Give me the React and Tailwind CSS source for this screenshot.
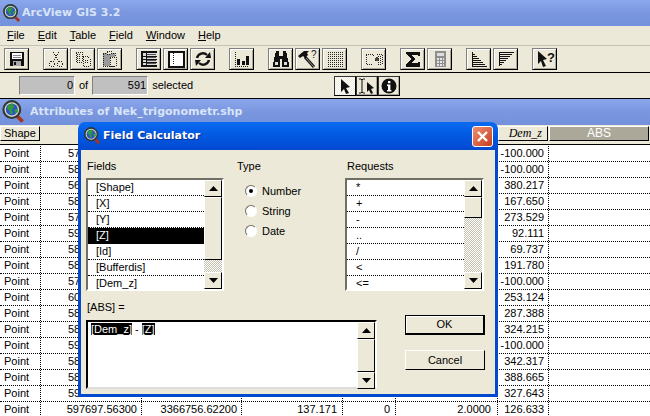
const FACE = "bg-[#ece9d8]";
const DITHER = "bg-[repeating-conic-gradient(#c4c1b0_0_25%,#fff_0_50%)] bg-size-[2px_2px]";

const GlobeIcon = ({ size = 20 }) => (
  <svg width={size} height={size} viewBox="0 0 20 20">
    <path d="M12 12l6 6" stroke="#a8321e" strokeWidth="3" />
    <circle cx="9" cy="8" r="7" fill="#d8d8c8" stroke="#2f3a35" strokeWidth="1.8" />
    <circle cx="9" cy="8" r="5" fill="#2f52c8" />
    <path d="M6 4l4-1 1 3-2 2 1 3-2 1-1-3-2-2z" fill="#2f9a3c" />
    <path d="M11 8l3-1 0 3-2 1z" fill="#2f9a3c" />
  </svg>
);

const Ic = ({ children }) => (
  <svg width="20" height="18" viewBox="0 0 20 18" shapeRendering="crispEdges">
    {children}
  </svg>
);

const dots = { fill: "none", stroke: "#222", strokeWidth: 1, strokeDasharray: "1 1" };

const icons = {
  save: (
    <Ic>
      <path d="M3 2h13l1 1v13H3z" fill="#111" />
      <path d="M5 3h10v6H5z" fill="#fff" />
      <path d="M6 5h8M6 7h8" stroke="#888" />
      <path d="M6 11h8v5H6z" fill="#aaa" />
      <path d="M7 12h2v3H7z" fill="#111" />
    </Ic>
  ),
  cut: (
    <Ic>
      <path d="M7 2l5 9M13 2l-5 9" {...dots} />
      <circle cx="6" cy="14" r="2.500" {...dots} />
      <circle cx="14" cy="14" r="2.500" {...dots} />
    </Ic>
  ),
  copy: (
    <Ic>
      <path d="M3 2h6v10H3zM10 6h4l3 3v7h-7z" {...dots} />
      <path d="M4 4h4M4 6h4M4 8h4M4 10h4M12 10h3M12 12h3" {...dots} />
    </Ic>
  ),
  paste: (
    <Ic>
      <path d="M3 3h12v13H3z" fill="#999" />
      <path d="M3 3h12v13H3z" {...dots} />
      <path d="M7 1h4v3H7zM10 7h6v9h-6z" fill="#ece9d8" stroke="#222" strokeDasharray="1 1" />
    </Ic>
  ),
  records: (
    <Ic>
      <path d="M2 1h16v16H2z" fill="#111" />
      <path d="M4 3h14v12H4z" fill="#ddd" />
      <path d="M7 3v12M4 6h14M4 9h14M4 12h14" stroke="#111" />
      <path d="M8 4h9M8 7h9M8 10h9M8 13h9" stroke="#555" />
    </Ic>
  ),
  blank: (
    <Ic>
      <path d="M2.500 1.500h15v15h-15z" fill="#fff" stroke="#111" strokeWidth="2" />
      <path d="M7 3v12" {...dots} />
      <path d="M18 2v15" stroke="#111" strokeWidth="2" />
    </Ic>
  ),
  swap: (
    <svg width="20" height="18" viewBox="0 0 20 18">
      <path d="M4 8a6 6 0 0 1 10-3" fill="none" stroke="#111" strokeWidth="2.400" />
      <path d="M12 8h6l-1-6z" fill="#111" />
      <path d="M16 10a6 6 0 0 1-10 3" fill="none" stroke="#111" strokeWidth="2.400" />
      <path d="M8 10H2l1 6z" fill="#111" />
    </svg>
  ),
  chart: (
    <Ic>
      <path d="M3 2v14" {...dots} />
      <path d="M3 16h14" {...dots} />
      <path d="M5 9h3v6H5zM10 11h3v4h-3zM14 6h3v9h-3z" fill="#111" />
    </Ic>
  ),
  binoculars: (
    <Ic>
      <path d="M5 1h3v5h4V1h3l3 13v3h-7V9H9v8H2v-3z" fill="#111" />
      <path d="M4 12h3v3H4zM13 12h3v3h-3z" fill="#ddd" />
    </Ic>
  ),
  hammer: (
    <svg width="22" height="20" viewBox="0 0 22 20">
      <path d="M1 7l6-5h5l-2 2 1 2-3 3-2-2-3 2z" fill="#111" />
      <path d="M8 8l9 10" stroke="#111" strokeWidth="3" />
      <path d="M9 9l8 9" stroke="#999" strokeWidth="1" />
      <text x="14" y="9" fontSize="10" fontFamily="Liberation Sans, sans-serif" fill="#111">?</text>
    </svg>
  ),
  grid: (
    <Ic>
      <path d="M3 2h15v15H3z" fill="#222" />
      <path d="M3 3h15M3 5h15M3 7h15M3 9h15M3 11h15M3 13h15M3 15h15" stroke="#ece9d8" />
      <path d="M4 2v15M6 2v15M8 2v15M10 2v15M12 2v15M14 2v15M16 2v15" stroke="#ece9d8" />
    </Ic>
  ),
  join: (
    <Ic>
      <path d="M2 4h7l3 5-3 5H2zM13 4h5v10h-5" {...dots} />
      <path d="M10 9l3-3 2 3-2 3z" fill="#444" />
      <path d="M14 6h4M14 8h4M14 10h4M14 12h4" {...dots} />
    </Ic>
  ),
  sigma: (
    <Ic>
      <path d="M3 2h14v4h-2l-1-1H8l5 4-5 4h6l1-1h2v5H3v-3l6-5-6-5z" fill="#111" />
    </Ic>
  ),
  calc: (
    <Ic>
      <path d="M5 1h11v16H5z" fill="#8e8e8e" />
      <path d="M7 3h7v3H7z" fill="#ddd" />
      <path d="M7 8h2v2H7zM10 8h2v2h-2zM13 8h1v2h-1zM7 11h2v2H7zM10 11h2v2h-2zM13 11h1v2h-1zM7 14h2v2H7zM10 14h2v2h-2zM13 14h1v2h-1z" fill="#e5e5e5" />
    </Ic>
  ),
  asc: (
    <Ic>
      <path d="M3 2v14" stroke="#111" />
      <path d="M3 4h3M3 6h5M3 8h7M3 10h9M3 12h11M3 14h13M3 16h15" stroke="#111" />
    </Ic>
  ),
  desc: (
    <Ic>
      <path d="M3 2v14" stroke="#111" />
      <path d="M3 2h15M3 4h13M3 6h11M3 8h9M3 10h7M3 12h5M3 14h3" stroke="#111" />
    </Ic>
  ),
  helpArrow: (
    <svg width="20" height="18" viewBox="0 0 20 18">
      <path d="M3 1l9 8-4 1 3 6-3 1-2-6-3 3z" fill="#111" />
      <text x="12" y="12" fontSize="13" fontWeight="700" fontFamily="Liberation Sans, sans-serif" fill="#111">?</text>
    </svg>
  ),
  arrow: (
    <svg width="16" height="16" viewBox="0 0 16 16">
      <path d="M4 1l9 8-4 1 3 5-3 1-2-5-3 3z" fill="#111" />
    </svg>
  ),
  ibeam: (
    <svg width="20" height="16" viewBox="0 0 20 16">
      <path d="M2 1h2l1 1 1-1h2M5 2v12M2 15h2l1-1 1 1h2" fill="none" stroke="#111" />
      <path d="M10 4l7 6-3 1 2 4-2 1-2-4-2 2z" fill="#111" />
    </svg>
  ),
  info: (
    <svg width="16" height="16" viewBox="0 0 16 16">
      <circle cx="8" cy="8" r="7.500" fill="#111" />
      <path d="M7 3h2.400v2.200H7zM6 6.500h3.400V12h1v1.400H6V12h1V8H6z" fill="#fff" />
    </svg>
  ),
};

const toolGroups = [
  ["save"],
  ["cut", "copy", "paste"],
  ["records", "blank", "swap"],
  ["chart"],
  ["binoculars", "hammer", "grid"],
  ["join"],
  ["sigma", "calc"],
  ["asc", "desc"],
  ["helpArrow"],
];

const ToolButton = ({ name }) => (
  <button
    type="button"
    className={`flex h-[22px] w-[25px] items-center justify-center border border-t-[#808080] border-l-[#808080] border-r-black border-b-black ${FACE} shadow-[inset_1px_1px_0_#fff,inset_-1px_-1px_0_#aca899]`}
  >
    {icons[name]}
  </button>
);

const Underlined = ({ text }) => (
  <span>
    <span className="underline">{text[0]}</span>
    {text.slice(1)}
  </span>
);

const columns = [
  "w-[41px] pl-[4px]",
  "w-[101px] pr-[4px] text-right",
  "w-[100px] pr-[4px] text-right",
  "w-[101px] pr-[5px] text-right",
  "w-[53px] pr-[5px] text-right",
  "w-[102px] pr-[6px] text-right",
  "w-[51px] pr-[4px] text-right",
  "w-[101px]",
];

const rowData = [
  ["57", "-100.000"],
  ["58", "-100.000"],
  ["56", "380.217"],
  ["58", "167.650"],
  ["57", "273.529"],
  ["59", "92.111"],
  ["58", "69.737"],
  ["58", "191.780"],
  ["57", "-100.000"],
  ["60", "253.124"],
  ["58", "287.388"],
  ["58", "324.215"],
  ["59", "-100.000"],
  ["58", "342.317"],
  ["58", "388.665"],
  ["59", "327.643"],
];

const TableRow = ({ cells, clipped }) => (
  <div className="flex h-[16px] shrink-0 border-b border-dotted border-black bg-white leading-[15px]">
    {columns.map((col, i) => (
      <div
        key={col}
        className={`${clipped && i === 1 ? "w-[101px] pl-[27px]" : col} overflow-hidden whitespace-nowrap ${i < 7 ? "border-r border-dotted border-black" : ""}`}
      >
        {cells[i]}
      </div>
    ))}
  </div>
);

const ScrollButton = ({ down }) => (
  <div
    className={`flex h-[17px] shrink-0 items-center justify-center border border-t-white border-l-white border-r-black border-b-black ${FACE}`}
  >
    <svg width="9" height="5" viewBox="0 0 9 5">
      <path d={down ? "M0 0h9L4.500 5z" : "M4.500 0L9 5H0z"} fill="#000" />
    </svg>
  </div>
);

const Scrollbar = ({ thumb }) => (
  <div className="flex w-[18px] shrink-0 flex-col">
    <ScrollButton />
    <div
      className={`shrink-0 border border-t-white border-l-white border-r-black border-b-black ${FACE}`}
      style={{ height: thumb }}
    />
    <div className={`min-h-0 flex-1 ${DITHER}`} />
    <ScrollButton down />
  </div>
);

const ListBox = ({ items, selected, thumb, itemClass = "pl-[8px]" }) => (
  <div className="flex h-[113px] border-2 border-t-[#716f64] border-l-[#716f64] border-r-white border-b-white">
    <div className="min-w-0 flex-1 overflow-hidden bg-white">
      {items.map((item) => (
        <div
          key={item}
          className={`h-[16px] border-b border-dotted border-black leading-[15px] ${itemClass} ${item === selected ? "bg-black text-white" : ""}`}
        >
          {item}
        </div>
      ))}
    </div>
    <Scrollbar thumb={thumb} />
  </div>
);

const Radio = ({ label, checked }) => (
  <div className="flex h-[20px] items-center gap-[5px]">
    <span className="flex h-[12px] w-[12px] items-center justify-center rounded-full border border-t-[#716f64] border-l-[#716f64] border-r-white border-b-white bg-white">
      {checked && <span className="h-[4px] w-[4px] rounded-full bg-black" />}
    </span>
    {label}
  </div>
);

const FieldCalculator = () => (
  <div className="absolute left-[78px] top-[122px] flex h-[275px] w-[420px] flex-col">
    <div className="flex h-[28px] shrink-0 items-center rounded-t-[7px] bg-gradient-to-b from-[#0a6af0] via-[#0258e0] to-[#0349d0] pl-[5px] pr-[5px]">
      <GlobeIcon size={18} />
      <span className="ml-[2px] flex-1 font-['DejaVu_Sans'] text-[11px] font-bold text-white [text-shadow:1px_1px_0_#0a2f90]">
        Field Calculator
      </span>
      <span className="flex h-[21px] w-[21px] items-center justify-center rounded-[3px] border border-white bg-gradient-to-br from-[#ea8f72] to-[#c8391a]">
        <svg width="13" height="13" viewBox="0 0 13 13">
          <path d="M2 2l9 9M11 2l-9 9" stroke="#fff" strokeWidth="2.400" />
        </svg>
      </span>
    </div>
    <div className={`flex-1 border-[3px] border-t-0 border-[#0349d0] ${FACE} pl-[5px] pt-[9px]`}>
      <div className="flex">
        <div className="w-[138px] shrink-0">
          <div className="h-[19px] pl-[1px] leading-[15px]">Fields</div>
          <ListBox
            items={["[Shape]", "[X]", "[Y]", "[Z]", "[Id]", "[Bufferdis]", "[Dem_z]"]}
            selected="[Z]"
            thumb={63}
          />
        </div>
        <div className="ml-[13px] w-[108px] shrink-0">
          <div className="h-[19px] leading-[15px]">Type</div>
          <div className="pl-[8px] pt-[3px]">
            <Radio label="Number" checked />
            <Radio label="String" />
            <Radio label="Date" />
          </div>
        </div>
        <div className="w-[139px] shrink-0">
          <div className="h-[19px] pl-[2px] leading-[15px]">Requests</div>
          <ListBox
            items={["*", "+", "-", "..", "/", "<", "<="]}
            thumb={21}
            itemClass="pl-[9px]"
          />
        </div>
      </div>
      <div className="mt-[9px] h-[20px] pl-[1px] leading-[15px]">[ABS] =</div>
      <div className="flex">
        <div className="flex h-[69px] w-[291px] shrink-0 border-2 border-t-[#000] border-l-[#000] border-r-white border-b-[#ddd]">
          <div className="min-w-0 flex-1 bg-white pl-[3px] pt-[1px] leading-[13px]">
            <span className="bg-black text-white">[Dem_z]</span>
            {" - "}
            <span className="bg-black text-white">[Z]</span>
          </div>
          <Scrollbar thumb={33} />
        </div>
        <div className="-mt-[5px] ml-[28px] flex w-[80px] shrink-0 flex-col gap-[15px]">
          <button
            type="button"
            className={`h-[20px] border border-r-2 border-b-2 border-black ${FACE} shadow-[inset_1px_1px_0_#fff]`}
          >
            OK
          </button>
          <button
            type="button"
            className={`h-[20px] border border-t-white border-l-white border-r-black border-b-black ${FACE}`}
          >
            Cancel
          </button>
        </div>
      </div>
    </div>
  </div>
);

const MenuBar = () => (
  <div className={`flex h-[20px] items-center gap-[13px] border-b border-[#c5c2b8] ${FACE} pl-[7px]`}>
    {["File", "Edit", "Table", "Field", "Window", "Help"].map((item) => (
      <Underlined key={item} text={item} />
    ))}
  </div>
);

const Toolbar = () => (
  <div className={`flex h-[27px] gap-[14px] border-b border-black ${FACE} pl-[4px] pt-[2px]`}>
    {toolGroups.map((group) => (
      <div key={group[0]} className="flex gap-[2px]">
        {group.map((name) => (
          <ToolButton key={name} name={name} />
        ))}
      </div>
    ))}
  </div>
);

const CountBox = ({ value }) => (
  <div className="flex h-[19px] w-[56px] items-center justify-end border border-t-[#808080] border-l-[#808080] border-r-white border-b-white bg-[#c0c0c0] pr-[1px]">
    {value}
  </div>
);

const SelectionBar = () => (
  <div className={`flex h-[26px] items-start border-b border-black ${FACE} pl-[19px] pt-[3px]`}>
    <CountBox value="0" />
    <span className="mx-[4px] leading-[19px]">of</span>
    <CountBox value="591" />
    <span className="ml-[4px] w-[182px] leading-[19px]">selected</span>
    <div className="flex">
      {["arrow", "ibeam", "info"].map((name, i) => (
        <div
          key={name}
          className={`flex h-[20px] w-[22px] items-center justify-center border border-t-[#333] border-l-[#333] border-r-black border-b-black ${i === 0 ? "bg-[repeating-conic-gradient(#ece9d8_0_25%,#fff_0_50%)] bg-size-[2px_2px]" : `${FACE} shadow-[inset_-1px_-1px_0_#aca899]`}`}
        >
          {icons[name]}
        </div>
      ))}
    </div>
  </div>
);

const HeaderCell = ({ className, children }) => (
  <div className={`h-[15px] shrink-0 border border-t-white border-l-white border-r-black border-b-black leading-[13px] ${className}`}>
    {children}
  </div>
);

const AttributeTable = () => (
  <div className="flex min-h-0 flex-1 flex-col overflow-hidden bg-white">
    <div className={`flex h-[20px] shrink-0 items-start border-b border-black ${FACE} pt-[1px]`}>
      <HeaderCell className="w-[40px] pl-[3px]">Shape</HeaderCell>
      <div className="w-[458px]" />
      <HeaderCell className="w-[50px] pr-[5px] text-right font-['Liberation_Serif'] text-[12px] italic">Dem_z</HeaderCell>
      <HeaderCell className="ml-[1px] w-[100px] bg-[#aca899] text-center text-[12px] text-white">ABS</HeaderCell>
    </div>
    <div className="h-px shrink-0" />
    {rowData.map(([prefix, demZ]) => (
      <TableRow key={prefix + demZ} clipped cells={["Point", prefix, "", "", "", "", demZ, ""]} />
    ))}
    <TableRow
      cells={["Point", "597697.56300", "3366756.62200", "137.171", "0", "2.0000", "126.633", ""]}
    />
  </div>
);

const TitleBar = ({ title, iconSize, className }) => (
  <div className={`flex h-[26px] shrink-0 items-center bg-gradient-to-b from-[#8ba7ec] via-[#7a96df] to-[#7391dc] font-['DejaVu_Sans'] text-[11px] font-bold text-[#d8e4f8] ${className}`}>
    <GlobeIcon size={iconSize} />
    <span>{title}</span>
  </div>
);

export default function App() {
  return (
    <div className="relative flex h-[416px] w-[650px] flex-col overflow-hidden bg-white font-['Liberation_Sans',sans-serif] text-[11px] text-black">
      <TitleBar title="ArcView GIS 3.2" iconSize={19} className="gap-[1px] pl-[2px]" />
      <MenuBar />
      <Toolbar />
      <SelectionBar />
      <TitleBar title="Attributes of Nek_trigonometr.shp" iconSize={24} className="gap-[5px] pl-[1px]" />
      <AttributeTable />
      <FieldCalculator />
    </div>
  );
}
